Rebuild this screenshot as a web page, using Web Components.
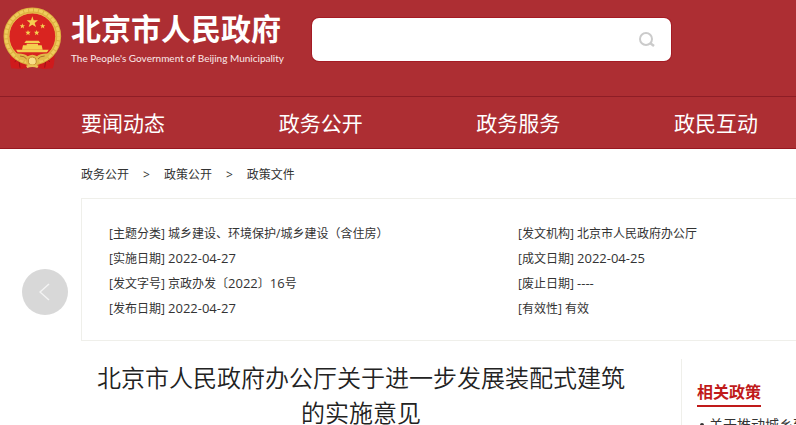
<!DOCTYPE html>
<html lang="zh-CN">
<head>
<meta charset="utf-8">
<title>北京市人民政府办公厅关于进一步发展装配式建筑的实施意见</title>
<style>
  html, body { margin: 0; height: 100%; overflow: hidden; }
  body {
    background: #fff;
    color: #333;
    font-family: "Open Sans", "Noto Sans CJK SC", sans-serif;
    font-size: 12px;
    --brand: #ad2e33;
    --brand-dark: #8e1d26;
    --accent: #c01a1a;
    --rule: #efefea;
    --gutter: 81px;
  }
</style>
</head>
<body>
<gov-page>
  <gov-header slot="header"></gov-header>
  <gov-nav slot="header">
    <a href="#news">要闻动态</a>
    <a href="#open">政务公开</a>
    <a href="#service">政务服务</a>
    <a href="#interact">政民互动</a>
  </gov-nav>
  <crumb-trail>
    <a href="#open">政务公开</a>
    <span>&gt;</span>
    <a href="#policy">政策公开</a>
    <span>&gt;</span>
    <a href="#files">政策文件</a>
  </crumb-trail>
  <doc-info>
    <info-field label="主题分类">城乡建设、环境保护/城乡建设（含住房）</info-field>
    <info-field label="发文机构">北京市人民政府办公厅</info-field>
    <info-field label="实施日期"><b>2022-04-27</b></info-field>
    <info-field label="成文日期"><b>2022-04-25</b></info-field>
    <info-field label="发文字号">京政办发〔<b>2022</b>〕<b>16</b>号</info-field>
    <info-field label="废止日期"><b>----</b></info-field>
    <info-field label="发布日期"><b>2022-04-27</b></info-field>
    <info-field label="有效性">有效</info-field>
  </doc-info>
  <doc-article>
    北京市人民政府办公厅关于进一步发展装配式建筑<br>的实施意见
    <related-list slot="aside" heading="相关政策">
      <a href="#related">关于推动城乡建设绿色发展的意见</a>
    </related-list>
  </doc-article>
  <prev-button slot="overlay"></prev-button>
</gov-page>

<script>
function define(name, html, setup) {
  const template = document.createElement('template');
  template.innerHTML = html;
  customElements.define(name, class extends HTMLElement {
    constructor() {
      super();
      this.attachShadow({ mode: 'open' }).append(template.content.cloneNode(true));
    }
    connectedCallback() { if (setup) setup(this); }
  });
}

define('gov-page', `
  <style>
    :host { display: block; position: relative; }
  </style>
  <header><slot name="header"></slot></header>
  <main><slot></slot></main>
  <slot name="overlay"></slot>`);

define('gov-emblem', `
  <style>
    :host { display: block; flex: none; }
    svg { display: block; }
  </style>
  <svg width="60" height="64" viewBox="6 20 180 192" role="img" aria-label="国徽">
    <path d="M34 150 Q26 178 34 204 L66 206 L96 198 L130 206 L158 204 Q168 178 160 150 Z" fill="#cf1a1c"/>
    <path d="M44 184l12 -8 4 26M150 184l-12 -8 -4 26" fill="none" stroke="#9a1418" stroke-width="3"/>
    <circle cx="97" cy="108" r="78" fill="#d92420"/>
    <circle cx="97" cy="108" r="78" fill="none" stroke="#dcae3f" stroke-width="17"/>
    <circle cx="97" cy="108" r="79" fill="none" stroke="#efcc5c" stroke-width="9" stroke-dasharray="12 3"/>
    <circle cx="97" cy="108" r="70" fill="none" stroke="#f0c855" stroke-width="2"/>
    <g fill="#f5cf50">
      <path d="M97 48l4 12h13l-10 8 4 12-11-7-11 7 4-12-10-8h13z"/>
      <path d="M67 69l2 5.500h6l-4.500 4 1.500 6-5-3.500-5 3.500 1.500-6-4.500-4h6z"/>
      <path d="M128 69l2 5.500h6l-4.500 4 1.500 6-5-3.500-5 3.500 1.500-6-4.500-4h6z"/>
      <path d="M84 89l2 5.500h6l-4.500 4 1.500 6-5-3.500-5 3.500 1.500-6-4.500-4h6z"/>
      <path d="M110 89l2 5.500h6l-4.500 4 1.500 6-5-3.500-5 3.500 1.500-6-4.500-4h6z"/>
      <path d="M78 121h38l5 7H73zM80 130h34v5H80zM69 135h56l3 13H66z"/>
      <path d="M48 148h98l-5 8H53z"/>
    </g>
    <path d="M44 160q28-3 39 8 14-10 28 0 11-11 39-8-8 22-32 20l-7 16H83l-7-16q-24 2-32-20z" fill="#e3b848"/>
    <path d="M60 167q14 0 20 9M134 167q-14 0-20 9" fill="none" stroke="#b0702a" stroke-width="3"/>
    <circle cx="97" cy="182" r="12" fill="#f8df86" stroke="#c48b30" stroke-width="3"/>
    <path d="M78 196q19-7 38 0l-4 7q-15-6-30 0z" fill="#e9c155"/>
  </svg>`);

define('site-search', `
  <style>
    :host { display: block; flex: 0 1 359px; }
    form {
      display: flex; align-items: center; box-sizing: border-box; height: 43px;
      padding-right: 14px; background: #fff; border-radius: 7px;
      box-shadow: 0 0 0 1px #a41b24;
    }
    input { flex: 1; min-width: 0; border: 0; outline: 0; background: none; padding: 0 14px; font: inherit; font-size: 14px; height: 100%; box-sizing: border-box; }
    button { display: flex; border: 0; padding: 0; background: none; cursor: pointer; }
  </style>
  <form role="search" onsubmit="return false">
    <input type="text" aria-label="搜索">
    <button type="submit" aria-label="搜索">
      <svg width="20" height="20" viewBox="0 0 20 20" fill="none" stroke="#cbcbcb" stroke-width="2">
        <circle cx="9" cy="9" r="6"/><path d="M13 13l4 3" stroke-width="2.500"/>
      </svg>
    </button>
  </form>`);

define('gov-header', `
  <style>
    :host {
      display: flex; align-items: flex-start; box-sizing: border-box; height: 97px; padding: 7px 24px 0 2px;
      background: var(--brand); border-bottom: 1px solid var(--brand-dark); color: #fff;
    }
    .brand { flex: none; display: flex; gap: 9px; width: 310px; color: inherit; text-decoration: none; }
    .names { display: flex; flex-direction: column; white-space: nowrap; }
    .cn { font-size: 30px; line-height: 44px; font-weight: 700; }
    .en { font-family: Lato, sans-serif; font-size: 10px; line-height: 14px; color: #fbeaea; }
    site-search { margin-top: 11px; }
  </style>
  <a class="brand" href="#home">
    <gov-emblem></gov-emblem>
    <span class="names">
      <span class="cn">北京市人民政府</span>
      <span class="en">The People's Government of Beijing Municipality</span>
    </span>
  </a>
  <site-search></site-search>`);

define('gov-nav', `
  <style>
    :host { display: block; background: var(--brand); border-bottom: 1px solid #981720; }
    nav {
      display: grid; grid-template-columns: 1fr 1fr 1fr auto; padding: 2px 38px 0 var(--gutter);
      font-size: 21px; line-height: 49px;
    }
    ::slotted(a) { color: #fff; text-decoration: none; white-space: nowrap; }
  </style>
  <nav><slot></slot></nav>`);

define('crumb-trail', `
  <style>
    :host { display: block; padding: 2px var(--gutter) 0; }
    nav { display: flex; gap: 14px; line-height: 47px; }
    ::slotted(a) { color: #333; text-decoration: none; }
  </style>
  <nav aria-label="面包屑"><slot></slot></nav>`);

define('doc-info', `
  <style>
    :host {
      display: grid; grid-template-columns: 409fr 278fr; margin-left: var(--gutter);
      padding: 22px 0 19px 27px; border: 1px solid var(--rule); border-right: 0;
    }
  </style>
  <slot></slot>`);

define('info-field', `
  <style>
    :host { display: block; line-height: 25px; white-space: nowrap; color: #333; }
    ::slotted(b) { font-size: 13px; line-height: 1; font-weight: 400; }
  </style>
  <span>[<span id="label"></span>]</span> <slot></slot>`,
  el => { el.shadowRoot.getElementById('label').textContent = el.getAttribute('label'); });

define('doc-article', `
  <style>
    :host { display: flex; gap: 40px; margin: 18px 0 0 var(--gutter); }
    h1 { flex: 1; margin: 0; font-family: "Noto Sans CJK SC DemiLight", "Noto Sans CJK SC", sans-serif; font-size: 24px; line-height: 35px; font-weight: 350; text-align: center; white-space: nowrap; color: #222; }
    aside { flex: 0 0 115px; box-sizing: border-box; min-width: 0; padding: 20px 0 0 15px; border-left: 1px solid var(--rule); overflow: hidden; }
  </style>
  <h1><slot></slot></h1>
  <aside><slot name="aside"></slot></aside>`);

define('related-list', `
  <style>
    :host { display: block; white-space: nowrap; }
    h2 { display: inline-block; margin: 0; font-size: 16px; line-height: 26px; font-weight: 700; color: var(--accent); border-bottom: 2px solid var(--accent); }
    ul { margin: 4px 0 0; padding: 0; list-style: none; font-size: 14px; line-height: 28px; }
    li { display: flex; align-items: center; gap: 5px; padding-left: 3px; }
    li::before { content: ""; flex: none; width: 4px; height: 4px; border-radius: 50%; background: #333; }
    ::slotted(a) { color: #333; text-decoration: none; }
  </style>
  <h2></h2>
  <ul><li><slot></slot></li></ul>`,
  el => { el.shadowRoot.querySelector('h2').textContent = el.getAttribute('heading'); });

define('prev-button', `
  <style>
    :host { position: absolute; left: 22px; top: 269px; }
    button { display: flex; align-items: center; justify-content: center; width: 46px; height: 46px; padding: 0; border: 0; border-radius: 50%; background: #d8d8d8; cursor: pointer; }
  </style>
  <button type="button" aria-label="上一页">
    <svg width="12" height="20" viewBox="0 0 12 20" fill="none" stroke="#f3f3f3" stroke-width="1.500"><path d="M10 2L1 10l9 8"/></svg>
  </button>`);
</script>
</body>
</html>
